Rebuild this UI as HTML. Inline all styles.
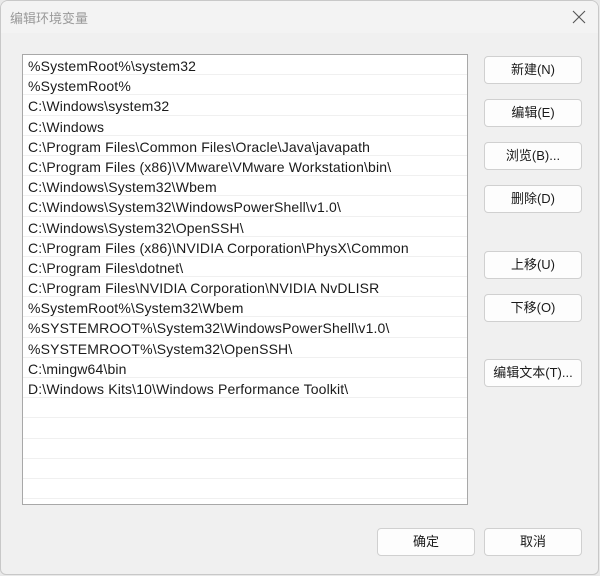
<!DOCTYPE html>
<html><head><meta charset="utf-8"><style>
*{margin:0;padding:0;box-sizing:border-box}
body{width:600px;height:576px;background:#e9e9e9;font-family:"Liberation Sans","Noto Sans CJK SC",sans-serif;position:relative;overflow:hidden}
.win{position:absolute;left:0;top:0;width:599px;height:575px;background:#f0f0f0;border:1px solid #c8c8c8;border-radius:8px 8px 6px 6px;overflow:hidden}
.title{position:absolute;left:0;top:0;width:100%;height:32px;background:#f3f3f3}
.title span{position:absolute;left:9px;top:7px;font-size:13px;color:#9a9a9a}
.x{position:absolute;right:12px;top:9px;width:14px;height:14px}
.list{position:absolute;left:21px;top:53px;width:446px;height:451px;background:#fff;border:1px solid #a8a8a8}
.row{height:20.2px;border-bottom:1px solid #f0f0f0;font-size:14px;letter-spacing:0.15px;line-height:22px;padding-left:5px;color:#1a1a1a;white-space:nowrap}
.btn{position:absolute;width:98px;height:28px;background:#fdfdfd;border:1px solid #d0d0d0;border-radius:4px;font-size:13px;color:#1a1a1a;text-align:center;line-height:26px}
</style></head><body>
<div class="win">
<div class="title"><span>编辑环境变量</span>
<svg class="x" viewBox="0 0 14 14"><path d="M1 1L13 13M13 1L1 13" stroke="#555" stroke-width="1.1"/></svg></div>
<div class="list">
<div class="row">%SystemRoot%\system32</div>
<div class="row">%SystemRoot%</div>
<div class="row">C:\Windows\system32</div>
<div class="row">C:\Windows</div>
<div class="row">C:\Program Files\Common Files\Oracle\Java\javapath</div>
<div class="row">C:\Program Files (x86)\VMware\VMware Workstation\bin\</div>
<div class="row">C:\Windows\System32\Wbem</div>
<div class="row">C:\Windows\System32\WindowsPowerShell\v1.0\</div>
<div class="row">C:\Windows\System32\OpenSSH\</div>
<div class="row">C:\Program Files (x86)\NVIDIA Corporation\PhysX\Common</div>
<div class="row">C:\Program Files\dotnet\</div>
<div class="row">C:\Program Files\NVIDIA Corporation\NVIDIA NvDLISR</div>
<div class="row">%SystemRoot%\System32\Wbem</div>
<div class="row">%SYSTEMROOT%\System32\WindowsPowerShell\v1.0\</div>
<div class="row">%SYSTEMROOT%\System32\OpenSSH\</div>
<div class="row">C:\mingw64\bin</div>
<div class="row">D:\Windows Kits\10\Windows Performance Toolkit\</div>
<div class="row"></div><div class="row"></div><div class="row"></div><div class="row"></div><div class="row"></div>
</div>
<div class="btn" style="left:483px;top:55px">新建(N)</div>
<div class="btn" style="left:483px;top:98px">编辑(E)</div>
<div class="btn" style="left:483px;top:141px">浏览(B)...</div>
<div class="btn" style="left:483px;top:184px">删除(D)</div>
<div class="btn" style="left:483px;top:250px">上移(U)</div>
<div class="btn" style="left:483px;top:293px">下移(O)</div>
<div class="btn" style="left:483px;top:358px">编辑文本(T)...</div>
<div class="btn" style="left:376px;top:527px">确定</div>
<div class="btn" style="left:483px;top:527px">取消</div>
</div>
</body></html>
